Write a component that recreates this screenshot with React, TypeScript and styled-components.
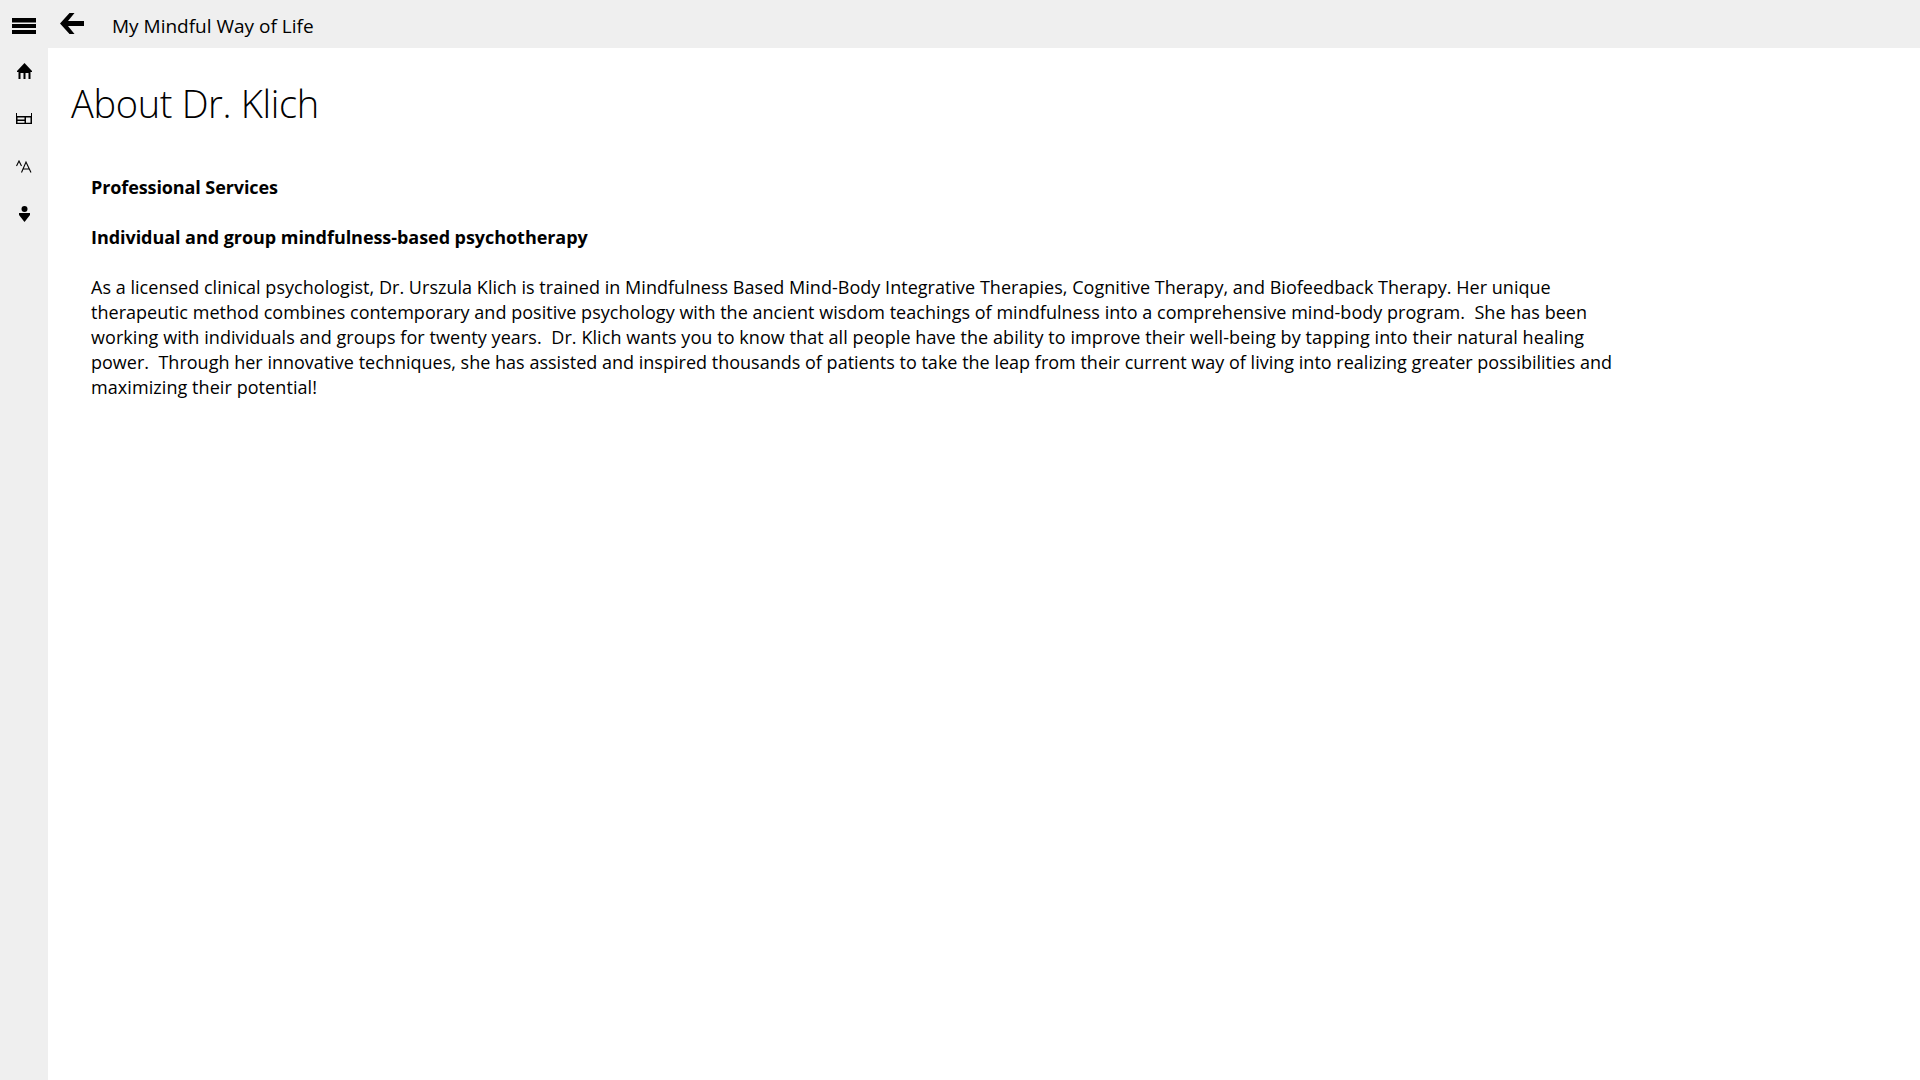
import { createGlobalStyle } from 'styled-components';
import styled from 'styled-components';

const GlobalStyle = createGlobalStyle`
  html, body {
    margin: 0;
    padding: 0;
    height: 100%;
    background: #fff;
    color: #000;
    font-family: "Open Sans", "Noto Sans", sans-serif;
  }
`;

const Shell = styled.div`
  display: flex;
  flex-direction: column;
  width: 1920px;
  height: 1080px;
  overflow: hidden;
`;

const TopBar = styled.header`
  display: flex;
  align-items: center;
  height: 48px;
  flex-shrink: 0;
  background: #efefef;
`;

const IconSlot = styled.button<{ $top?: number; $bottom?: number }>`
  display: flex;
  align-items: center;
  justify-content: center;
  box-sizing: border-box;
  width: 48px;
  height: 48px;
  flex-shrink: 0;
  padding: ${(p) => p.$top ?? 0}px 0 ${(p) => p.$bottom ?? 0}px;
  border: 0;
  background: transparent;
  color: #000;
`;

const AppTitle = styled.span`
  margin-left: 16px;
  padding-top: 3px;
  font-size: 19px;
  line-height: 48px;
`;

const Body = styled.div`
  display: flex;
  flex: 1;
`;

const SideBar = styled.nav`
  display: flex;
  flex-direction: column;
  width: 48px;
  flex-shrink: 0;
  background: #efefef;
`;

const Main = styled.main`
  flex: 1;
  padding: 0 0 0 23px;
`;

const PageTitle = styled.h1`
  margin: 0;
  padding-top: 29px;
  font-size: 38px;
  font-weight: 300;
  line-height: 52px;
  letter-spacing: -0.35px;
`;

const Content = styled.div`
  margin: 46px 0 0 20px;
  width: 1560px;
  font-size: 18px;
  line-height: 25px;
`;

const Heading = styled.p<{ $spacing: number }>`
  margin: 0 0 25px;
  font-weight: 700;
  letter-spacing: ${(p) => p.$spacing}px;
`;

const Paragraph = styled.div`
  white-space: pre;
`;

const Line = styled.div<{ $spacing: number }>`
  letter-spacing: ${(p) => p.$spacing}px;
`;

const lines = [
  { text: 'As a licensed clinical psychologist, Dr. Urszula Klich is trained in Mindfulness Based Mind-Body Integrative Therapies, Cognitive Therapy, and Biofeedback Therapy. Her unique', spacing: 0.03 },
  { text: 'therapeutic method combines contemporary and positive psychology with the ancient wisdom teachings of mindfulness into a comprehensive mind-body program.  She has been', spacing: 0.03 },
  { text: 'working with individuals and groups for twenty years.  Dr. Klich wants you to know that all people have the ability to improve their well-being by tapping into their natural healing', spacing: 0.07 },
  { text: 'power.  Through her innovative techniques, she has assisted and inspired thousands of patients to take the leap from their current way of living into realizing greater possibilities and', spacing: 0.01 },
  { text: 'maximizing their potential!', spacing: 0.07 },
];

const App = () => {
  return (
    <Shell>
      <GlobalStyle />
      <TopBar>
        <IconSlot aria-label="Menu" $top={4}>
          <svg width="24" height="16" viewBox="0 0 24 16" fill="currentColor">
            <rect x="0" y="0" width="24" height="4.5" />
            <rect x="0" y="6" width="24" height="4" />
            <rect x="0" y="12" width="24" height="4" />
          </svg>
        </IconSlot>
        <IconSlot aria-label="Back" $bottom={2}>
          <svg width="24" height="21" viewBox="0 0 24 21" fill="currentColor">
            <path d="M9.5 0 H14.5 L8 8 H24 V13 H8 L14.5 21 H9.5 L0 10.5 Z" />
          </svg>
        </IconSlot>
        <AppTitle>My Mindful Way of Life</AppTitle>
      </TopBar>
      <Body>
        <SideBar>
          <IconSlot aria-label="Home" $bottom={3}>
            <svg width="15" height="16" viewBox="0 0 15 16" fill="currentColor">
              <path fillRule="evenodd" d="M7.5 0 L15 8 V9 H13.5 V16 H1.5 V9 H0 V8 Z M3.5 10 V16 H6.5 V10 Z M8.5 10 V16 H11.5 V10 Z" />
            </svg>
          </IconSlot>
          <IconSlot aria-label="Bed" $bottom={3}>
            <svg width="16" height="11" viewBox="0 0 16 11" fill="currentColor">
              <path d="M0 0 H1 V3 H15 V0 H16 V11 H0 Z M1.5 4.5 V6.5 H8.5 V4.5 Z M1.5 8 V9.8 H8.5 V8 Z M10 4.5 V9.8 H14.5 V4.5 Z" fillRule="evenodd" />
            </svg>
          </IconSlot>
          <IconSlot aria-label="Text size" $bottom={3}>
            <svg width="16" height="13" viewBox="0 0 16 13" fill="none" stroke="currentColor" strokeWidth="1.1">
              <path d="M0.5 6 L3 1 L5.5 6" />
              <path d="M5.5 12.5 L10 2 L15 12.5 M7.2 9 H13.3" />
            </svg>
          </IconSlot>
          <IconSlot aria-label="Meditate" $bottom={5}>
            <svg width="11" height="16" viewBox="0 0 11 16" fill="currentColor">
              <circle cx="5.5" cy="3" r="3" />
              <path d="M0 7 H11 V9 L5.5 16 L0 9 Z" />
            </svg>
          </IconSlot>
        </SideBar>
        <Main>
          <PageTitle>About Dr. Klich</PageTitle>
          <Content>
            <Heading $spacing={-0.1}>Professional Services</Heading>
            <Heading $spacing={-0.05}>Individual and group mindfulness-based psychotherapy</Heading>
            <Paragraph>
              {lines.map((line) => (
                <Line key={line.text} $spacing={line.spacing}>
                  {line.text}
                </Line>
              ))}
            </Paragraph>
          </Content>
        </Main>
      </Body>
    </Shell>
  );
};

export default App;
